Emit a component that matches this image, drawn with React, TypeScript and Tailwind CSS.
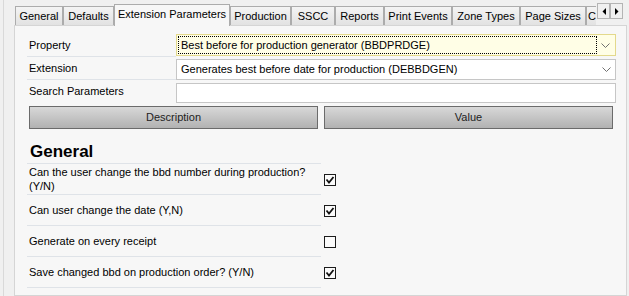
const tabs = [
  { label: "General", w: "w-[48px]" },
  { label: "Defaults", w: "w-[51px]" },
  { label: "Extension Parameters", w: "w-[116px]", active: true },
  { label: "Production", w: "w-[61px]" },
  { label: "SSCC", w: "w-[44px]" },
  { label: "Reports", w: "w-[49px]" },
  { label: "Print Events", w: "w-[68px]" },
  { label: "Zone Types", w: "w-[68px]" },
  { label: "Page Sizes", w: "w-[66px]" },
];

const rows = [
  { text: ["Can the user change the bbd number during production?", "(Y/N)"], checked: true },
  { text: ["Can user change the date (Y,N)"], checked: true },
  { text: ["Generate on every receipt"], checked: false },
  { text: ["Save changed bbd on production order? (Y/N)"], checked: true },
];

function Chevron() {
  return (
    <svg width="9" height="5" viewBox="0 0 9 5">
      <polyline points="0.5,0.5 4.5,4.5 8.5,0.5" fill="none" stroke="#707070" strokeWidth="1" />
    </svg>
  );
}

function CheckBox({ checked }: { checked: boolean }) {
  return (
    <div className="w-[12px] h-[12px] border border-[#1c1c1c] bg-[#fbfbfb] flex items-center justify-center">
      {checked && (
        <svg width="10" height="10" viewBox="0 0 10 10">
          <path d="M1.5 4.5 L4 7.5 L8.5 2" fill="none" stroke="#111" strokeWidth="1.8" />
        </svg>
      )}
    </div>
  );
}

function Arrow({ dir }: { dir: "left" | "right" }) {
  return (
    <div className="w-[13px] h-[16px] border border-[#b4b4b4] bg-[#f0f0f0] flex items-center justify-center">
      <svg width="4" height="7" viewBox="0 0 4 7">
        {dir === "left" ? <polygon points="4,0 4,7 0.5,3.5" fill="#000" /> : <polygon points="0,0 0,7 3.5,3.5" fill="#000" />}
      </svg>
    </div>
  );
}

export default function App() {
  return (
    <div className="w-[629px] h-[296px] overflow-hidden bg-[#f0f0f0] font-['Liberation_Sans',Arial,sans-serif] text-[11px] text-black">
      <div className="ml-[3px] h-full border-l border-[#d9d9d9] pl-[10px] pr-[2px] flex flex-col">
        {/* tab strip */}
        <div className="flex items-end h-[25px] pl-px shrink-0">
          {tabs.map((t) =>
            t.active ? (
              <div
                key={t.label}
                className={`${t.w} h-[22px] -mb-px relative z-10 bg-[#f7f7f7] border border-b-0 border-[#acacac] flex items-center justify-center pb-[2px] leading-none`}
              >
                {t.label}
              </div>
            ) : (
              <div
                key={t.label}
                className={`${t.w} h-[19px] bg-linear-to-b from-[#f4f4f4] to-[#e2e2e2] border border-b-0 border-[#acacac] flex items-center justify-center leading-none`}
              >
                {t.label}
              </div>
            )
          )}
          <div className="w-[10px] h-[19px] bg-linear-to-b from-[#f4f4f4] to-[#e2e2e2] border border-b-0 border-r-0 border-[#acacac] flex items-center pl-[1px] leading-none">
            C
          </div>
          <div className="self-start mt-[3px] ml-px flex">
            <Arrow dir="left" />
            <Arrow dir="right" />
          </div>
        </div>

        {/* panel */}
        <div className="flex-1 border border-[#d5d5d5] bg-[#f7f7f7] pt-[8px] pl-[12px] pr-[10px]">
          <div className="flex h-[23px]">
            <div className="w-[149px] border-b border-[#dfe3e8] flex items-center pl-[2px]">Property</div>
            <div className="flex-1 h-[22px] border border-[#e3d98c] bg-[#fffee6] p-px flex">
              <div className="flex-1 border border-dotted border-black flex items-center pl-[2px] whitespace-nowrap">
                Best before for production generator (BBDPRDGE)
              </div>
              <div className="w-[17px] flex items-center justify-center">
                <Chevron />
              </div>
            </div>
          </div>
          <div className="flex h-[23px]">
            <div className="w-[149px] border-b border-[#dfe3e8] flex items-center pl-[2px]">Extension</div>
            <div className="flex-1 h-[21px] mt-[2px] border border-[#c6c6c6] bg-white flex">
              <div className="flex-1 flex items-center pl-[4px] whitespace-nowrap">
                Generates best before date for production (DEBBDGEN)
              </div>
              <div className="w-[18px] flex items-center justify-center">
                <Chevron />
              </div>
            </div>
          </div>
          <div className="flex h-[23px]">
            <div className="w-[149px] flex items-center pl-[2px]">Search Parameters</div>
            <div className="flex-1 h-[20px] mt-[3px] border border-[#c6c6c6] bg-white" />
          </div>

          <div className="flex gap-[6px] mt-[3px] ml-[2px] mr-[3px] h-[23px]">
            <div className="flex-1 border border-[#6b6b6b] bg-linear-to-b from-[#d8d8d8] to-[#b2b2b2] flex items-center justify-center text-[#222]">
              Description
            </div>
            <div className="flex-1 border border-[#6b6b6b] bg-linear-to-b from-[#d8d8d8] to-[#b2b2b2] flex items-center justify-center text-[#222]">
              Value
            </div>
          </div>

          <div className="w-[294px] h-[35px] border-b border-[#dfe3e8] flex items-end pl-[3px] pb-px">
            <span className="text-[17px] font-bold leading-[20px]">General</span>
          </div>

          {rows.map((r, i) => (
            <div key={i} className="flex h-[31px]">
              <div className="w-[294px] border-b border-[#dfe3e8] flex flex-col justify-center pl-[2px] leading-[14px]">
                {r.text.map((line) => (
                  <span key={line}>{line}</span>
                ))}
              </div>
              <div className="pl-[3px] flex items-center">
                <CheckBox checked={r.checked} />
              </div>
            </div>
          ))}
        </div>
      </div>
    </div>
  );
}
